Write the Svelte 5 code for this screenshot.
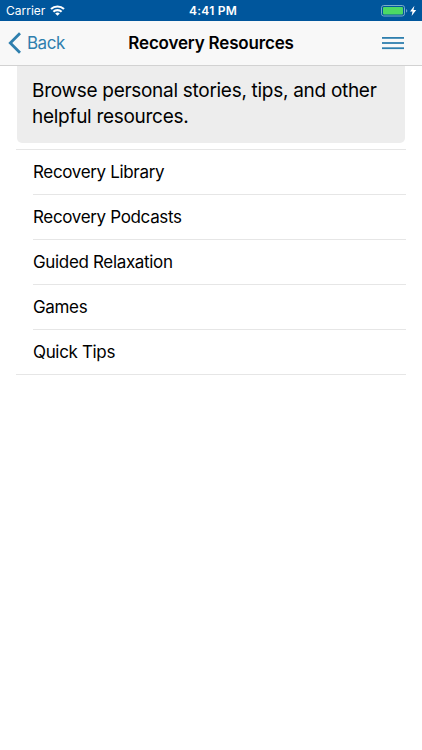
<script lang="ts">
	const resources = [
		'Recovery Library',
		'Recovery Podcasts',
		'Guided Relaxation',
		'Games',
		'Quick Tips'
	];
</script>

<div class="screen">
	<div class="statusBar">
		<div class="carrier">
			<span>Carrier</span>
			<svg width="15" height="11" viewBox="0 0 15 11" fill="none" stroke="#fff" stroke-width="2.1">
				<path d="M1 4.1a9.3 9.3 0 0 1 13 0" />
				<path d="M3.4 6.8a5.8 5.8 0 0 1 8.2 0" />
				<path d="M7.5 10.8 5.2 8.5a3.3 3.3 0 0 1 4.6 0z" fill="#fff" stroke="none" />
			</svg>
		</div>
		<span class="time">4:41 PM</span>
		<div class="battery">
			<svg width="36" height="12" viewBox="0 0 36 12">
				<rect x=".5" y=".5" width="23" height="10.5" rx="2.2" fill="none" stroke="#78adc8" />
				<rect x="2" y="2" width="20" height="7.5" rx="1" fill="#4cd964" />
				<path d="M25 4v3.6q1.3-.4 1.3-1.8T25 4z" fill="#6a9fce" />
				<path d="M33.4 .8 29 6.5h2.5L30.6 11l4.6-5.9h-2.7z" fill="#fff" />
			</svg>
		</div>
	</div>

	<header class="navBar">
		<button class="back">
			<svg width="14" height="22" viewBox="0 0 14 22" fill="none" stroke="#2f7fae" stroke-width="2.8">
				<path d="M12 1.2 2.3 11 12 20.8" />
			</svg>
			<span>Back</span>
		</button>
		<h1 class="title">Recovery Resources</h1>
		<button class="menu" aria-label="Menu">
			<svg width="22" height="14" viewBox="0 0 22 14" fill="#2f7fae">
				<rect y="1" width="22" height="1.8" />
				<rect y="6.1" width="22" height="1.8" />
				<rect y="11.3" width="22" height="1.8" />
			</svg>
		</button>
	</header>

	<main class="content">
		<p class="intro">Browse personal stories, tips, and other helpful resources.</p>

		<ul class="list">
			{#each resources as label}
				<li class="item">
					<button class="entry">{label}</button>
				</li>
			{/each}
		</ul>
	</main>
</div>

<style>
	:global(body) {
		margin: 0;
		background: #fff;
	}
	.screen {
		height: 750px;
		overflow: hidden;
		background: #fff;
		color: #000;
		font-family: Inter, 'Liberation Sans', sans-serif;
	}
	button {
		padding: 0;
		border: 0;
		background: none;
		color: inherit;
		font: inherit;
	}
	svg {
		display: block;
		flex-shrink: 0;
	}
	.statusBar {
		display: grid;
		grid-template-columns: 1fr auto 1fr;
		align-items: center;
		box-sizing: border-box;
		height: 21px;
		padding: 1px 5px 0 6px;
		background: #00569c;
		color: #fff;
		font-size: 12px;
		line-height: 20px;
	}
	.carrier {
		display: flex;
		align-items: center;
		gap: 5px;

		& svg {
			margin-top: -1px;
		}
	}
	.time {
		margin-left: 3px;
		font-weight: 600;
		letter-spacing: 0.25px;
	}
	.battery {
		display: flex;
		justify-content: flex-end;
	}
	.navBar {
		display: grid;
		grid-template-columns: 1fr auto 1fr;
		align-items: center;
		box-sizing: border-box;
		height: 45px;
		padding: 0 8px;
		background: #f8f8f8;
		border-bottom: 1px solid #d2d2d2;
	}
	.back {
		display: flex;
		align-items: center;
		gap: 5px;
		color: #2f7fae;
		font-size: 17px;
		letter-spacing: -0.5px;
	}
	.title {
		margin: 0;
		font-size: 17px;
		font-weight: 600;
		letter-spacing: -0.18px;
	}
	.menu {
		justify-self: end;
		margin-right: 10px;
	}
	.content {
		padding: 0 16px;
	}
	.intro {
		box-sizing: border-box;
		height: 77px;
		margin: 0 1px 6px;
		padding: 12px 15px 0;
		border-radius: 0 0 5px 5px;
		background: #ededed;
		font-size: 19px;
		line-height: 26px;
		letter-spacing: -0.29px;
	}
	.list {
		margin: 0;
		padding: 0;
		list-style: none;
		border-block: 1px solid #e6e6e6;
	}
	.item {
		height: 44px;
		margin-left: 17px;

		& + & {
			border-top: 1px solid #e6e6e6;
		}
	}
	.entry {
		width: 100%;
		height: 44px;
		font-size: 17px;
		letter-spacing: -0.34px;
		text-align: left;
	}
</style>
